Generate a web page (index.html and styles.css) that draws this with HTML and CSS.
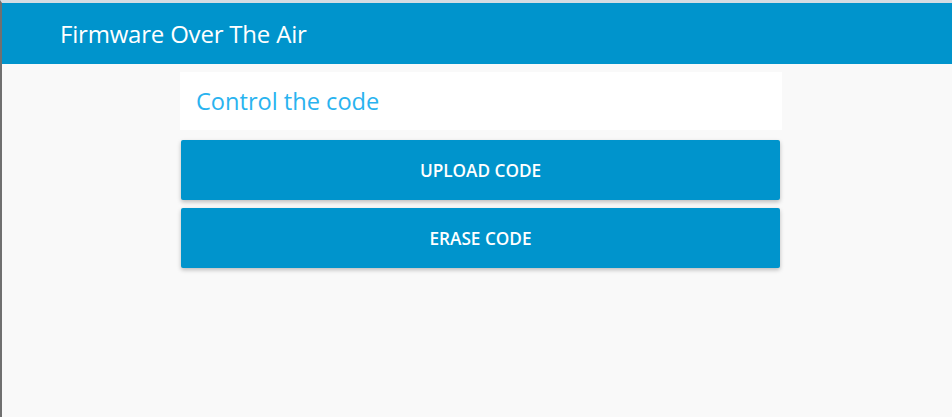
FILE: index.html
```html
<!DOCTYPE html>
<html>
<head>
<meta charset="utf-8">
<link rel="stylesheet" href="styles.css">
</head>
<body>
<div class="frame">
  <header class="topbar">
    <h1 class="topbar-title">Firmware Over The Air</h1>
  </header>
  <main class="content">
    <section class="panel">
      <div class="card">
        <h2 class="card-title">Control the code</h2>
      </div>
      <button class="action">UPLOAD CODE</button>
      <button class="action">ERASE CODE</button>
    </section>
  </main>
</div>
</body>
</html>
```
FILE: styles.css
```css
html, body {
  margin: 0;
  padding: 0;
  height: 100%;
  background: #f9f9f9;
  font-family: "Open Sans", "Noto Sans", sans-serif;
}
.frame {
  min-height: 100%;
  box-sizing: border-box;
  border-top: 3px solid #d5dde3;
  border-left: 2px solid #707070;
  background: #f9f9f9;
}
.topbar {
  height: 61px;
  background: #0094cc;
  display: flex;
  align-items: center;
  padding-left: 58px;
}
.topbar-title {
  margin: 0;
  color: #fff;
  font-weight: 400;
  font-size: 24px;
  letter-spacing: -0.2px;
}
.content {
  padding-top: 8px;
  padding-left: 178px;
}
.panel {
  width: 602px;
  display: flex;
  flex-direction: column;
  gap: 8px;
}
.card {
  background: #fff;
  height: 58px;
  display: flex;
  align-items: center;
  padding-left: 16px;
  box-sizing: border-box;
  margin-bottom: 2px;
}
.card-title {
  margin: 0;
  color: #29b3ef;
  font-weight: 500;
  font-size: 23.6px;
}
.action {
  margin: 0 2px 0 1px;
  height: 60px;
  border: none;
  border-radius: 2px;
  background: #0094cc;
  color: #fff;
  font-family: inherit;
  font-weight: 600;
  font-size: 17.2px;
  box-shadow: 0 2px 4px rgba(0,0,0,0.25);
}
```
